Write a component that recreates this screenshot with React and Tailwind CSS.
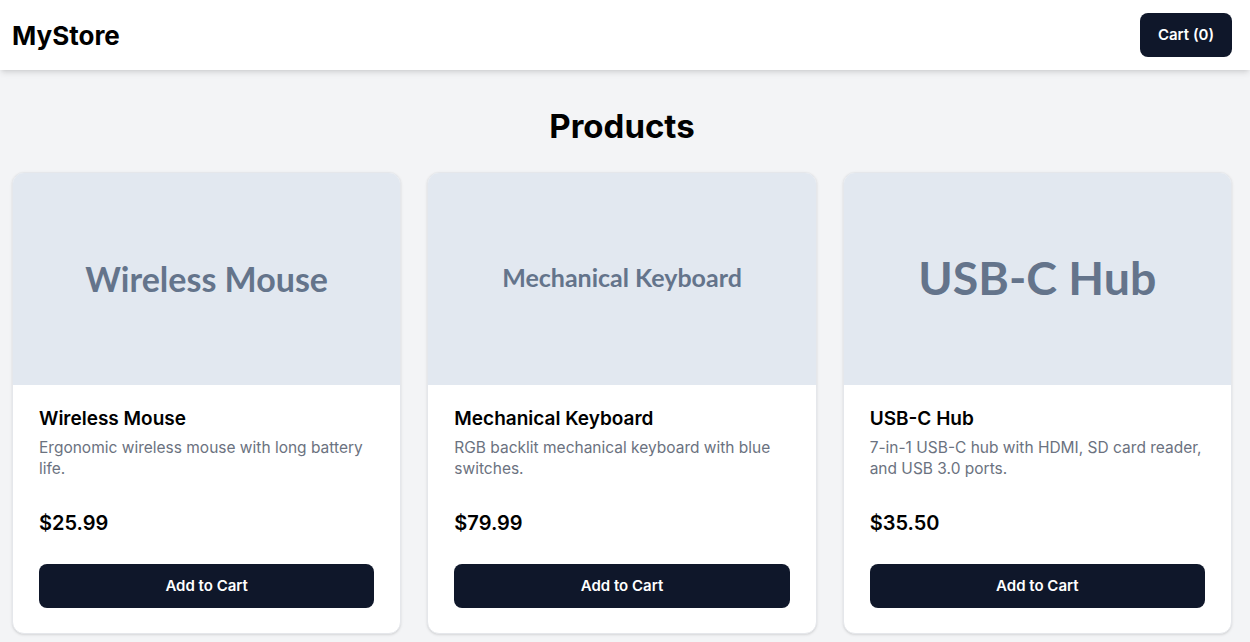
import { useState } from 'react';

const products = [
  { id: 1, name: 'Wireless Mouse', desc: 'Ergonomic wireless mouse with long battery life.', price: 25.99, label: 'text-[34px]' },
  { id: 2, name: 'Mechanical Keyboard', desc: 'RGB backlit mechanical keyboard with blue switches.', price: 79.99, label: 'text-[25px]' },
  { id: 3, name: 'USB-C Hub', desc: '7-in-1 USB-C hub with HDMI, SD card reader, and USB 3.0 ports.', price: 35.5, label: 'text-[46.5px]' },
];

function ProductCard({ p, onAdd }) {
  return (
    <div className="flex flex-col bg-white rounded-xl border border-gray-200 shadow-sm overflow-hidden">
      <div className="h-[212px] bg-[#e2e8f0] flex items-center justify-center">
        <span className={`${p.label} font-bold text-[#64748b] -mt-[2px]`} style={{ fontFamily: 'Lato, sans-serif' }}>{p.name}</span>
      </div>
      <div className="flex flex-col flex-1 px-[26px] pt-[20px] pb-[25px]">
        <h2 className="text-[19px] leading-[28px] font-semibold text-black">{p.name}</h2>
        <p className="mt-[4px] text-[15.5px] leading-[21px] text-[#6b7280]">{p.desc}</p>
        <div className="mt-[30px] text-[20px] leading-[28px] font-semibold text-black">${p.price.toFixed(2)}</div>
        <button onClick={onAdd} className="mt-[27px] h-[44px] w-full rounded-lg bg-[#0f172a] text-white text-[15px] font-semibold">
          Add to Cart
        </button>
      </div>
    </div>
  );
}

export default function App() {
  const [cart, setCart] = useState(0);

  return (
    <div className="min-h-screen bg-[#f3f4f6]" style={{ fontFamily: 'Inter, "Liberation Sans", sans-serif' }}>
      <header className="h-[70px] bg-white shadow-md flex items-center justify-between pl-3 pr-[18px]">
        <h1 className="text-[26px] font-bold text-black mt-[1px]">MyStore</h1>
        <button className="h-[44px] px-[18px] rounded-lg bg-[#0f172a] text-white text-[15px] font-semibold">
          Cart ({cart})
        </button>
      </header>
      <main className="pl-3 pr-[18px] pt-[32px] pb-8">
        <h2 className="text-[33px] font-bold text-black text-center leading-[48px]">Products</h2>
        <div className="mt-[22px] grid grid-cols-3 gap-[26px]">
          {products.map(p => (
            <ProductCard key={p.id} p={p} onAdd={() => setCart(c => c + 1)} />
          ))}
        </div>
      </main>
    </div>
  );
}
